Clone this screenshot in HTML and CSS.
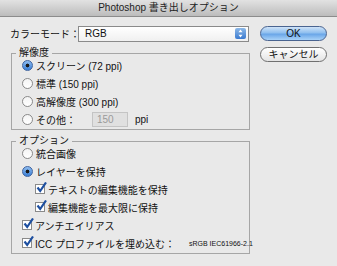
FILE: index.html
```html
<!DOCTYPE html>
<html lang="ja">
<head>
    <meta charset="UTF-8">
    <title>Photoshop 書き出しオプション</title>
    <link rel="stylesheet" href="styles.css">
</head>
<body>
    <div class="window">
        <div class="titlebar">Photoshop 書き出しオプション</div>

        <div class="content">
            <div class="main">
                <!-- Color mode -->
                <div class="mode-row">
                    <span class="mode-label">カラーモード：</span>
                    <div class="select">
                        <span>RGB</span>
                        <span class="select-arrow">
                            <svg width="5" height="9" viewBox="0 0 5 9"><path d="M2.5 0.5 L4.5 3.2 L0.5 3.2 Z M2.5 8.5 L4.5 5.8 L0.5 5.8 Z" fill="#fff"/></svg>
                        </span>
                    </div>
                </div>

                <!-- Resolution -->
                <div class="group group-res">
                    <span class="legend">解像度</span>
                    <div class="row"><span class="radio on"></span>スクリーン (72 ppi)</div>
                    <div class="row"><span class="radio"></span>標準 (150 ppi)</div>
                    <div class="row"><span class="radio"></span>高解像度 (300 ppi)</div>
                    <div class="row">
                        <span class="radio"></span><span class="other-label">その他：</span>
                        <span class="num-input">150</span>
                        <span class="unit">ppi</span>
                    </div>
                </div>

                <!-- Options -->
                <div class="group group-opt">
                    <span class="legend">オプション</span>
                    <div class="row"><span class="radio"></span>統合画像</div>
                    <div class="row"><span class="radio on"></span>レイヤーを保持</div>
                    <div class="row indent"><span class="check"><svg width="11" height="11" viewBox="0 0 11 11"><path d="M1.5 5.5 L4.2 9 L10 0.5" fill="none" stroke="#1d4fa0" stroke-width="2.2"/></svg></span>テキストの編集機能を保持</div>
                    <div class="row indent"><span class="check"><svg width="11" height="11" viewBox="0 0 11 11"><path d="M1.5 5.5 L4.2 9 L10 0.5" fill="none" stroke="#1d4fa0" stroke-width="2.2"/></svg></span>編集機能を最大限に保持</div>
                    <div class="row"><span class="check"><svg width="11" height="11" viewBox="0 0 11 11"><path d="M1.5 5.5 L4.2 9 L10 0.5" fill="none" stroke="#1d4fa0" stroke-width="2.2"/></svg></span>アンチエイリアス</div>
                    <div class="row"><span class="check"><svg width="11" height="11" viewBox="0 0 11 11"><path d="M1.5 5.5 L4.2 9 L10 0.5" fill="none" stroke="#1d4fa0" stroke-width="2.2"/></svg></span>ICC プロファイルを埋め込む：<span class="profile">sRGB IEC61966-2.1</span></div>
                </div>
            </div>

            <div class="buttons">
                <button class="btn btn-ok">OK</button>
                <button class="btn">キャンセル</button>
            </div>
        </div>
    </div>
</body>
</html>
```

FILE: styles.css
```css
* {
    margin: 0;
    padding: 0;
    box-sizing: border-box;
}

body {
    font-family: 'Liberation Sans', 'Noto Sans CJK JP', sans-serif;
    font-size: 10px;
    color: #111;
    background: #e9e9e9;
}

.window {
    width: 337px;
    height: 266px;
    overflow: hidden;
}

.titlebar {
    height: 17px;
    line-height: 16px;
    text-align: center;
    font-size: 10px;
    color: #222;
    background: linear-gradient(#e2e2e2, #bcbcbc);
    border-bottom: 1px solid #8c8c8c;
}

.content {
    display: flex;
}

.main {
    width: 252px;
    padding: 8px 0 0 11px;
}

.mode-row {
    display: flex;
    align-items: center;
    height: 17px;
}

.mode-label {
    width: 68px;
    margin-left: -1px;
    white-space: nowrap;
}

.select {
    display: flex;
    align-items: center;
    justify-content: space-between;
    width: 171px;
    height: 16px;
    padding: 0 2px 0 6px;
    border: 1px solid #8a8a8a;
    background: linear-gradient(#ffffff, #f0f0f0);
}

.select-arrow {
    display: flex;
    align-items: center;
    justify-content: center;
    width: 11px;
    height: 11px;
    border-radius: 2px;
    background: linear-gradient(#8cb8e8, #3b7bd0);
}

.group {
    position: relative;
    width: 239px;
    border: 1px solid #a6a6a6;
    padding: 2px 0 1px 10px;
}

.group-res {
    margin-top: 11px;
}

.group-opt {
    margin-top: 11px;
    padding-bottom: 1px;
}

.legend {
    position: absolute;
    top: -8px;
    left: 4px;
    padding: 0 3px;
    background: #e9e9e9;
    line-height: 14px;
}

.row {
    display: flex;
    align-items: center;
    height: 18px;
    white-space: nowrap;
}

.row.indent {
    padding-left: 13px;
}

.radio {
    width: 11px;
    height: 11px;
    margin-right: 3px;
    border: 1px solid #8a8a8a;
    border-radius: 50%;
    background: linear-gradient(#f4f4f4, #ffffff);
    flex-shrink: 0;
}

.radio.on {
    border-color: #3e64a0;
    background: radial-gradient(circle, #1a1a1a 0 1.6px, transparent 2.2px), linear-gradient(#8fbcef, #3a7fd6);
}

.check {
    display: flex;
    align-items: center;
    justify-content: center;
    width: 10px;
    height: 10px;
    margin-right: 3px;
    border: 1px solid #8a8a8a;
    background: #fff;
    flex-shrink: 0;
}

.check svg {
    margin: -4px -3px 0 0;
}

.other-label {
    width: 56px;
}

.num-input {
    width: 36px;
    height: 15px;
    line-height: 13px;
    padding-left: 4px;
    border: 1px solid #c4c4c4;
    background: #e0e0e0;
    color: #9a9a9a;
}

.unit {
    margin-left: 7px;
}

.profile {
    margin-left: 14px;
    font-size: 7px;
}

.buttons {
    display: flex;
    flex-direction: column;
    gap: 6px;
    padding: 9px 0 0 8px;
}

.btn {
    width: 67px;
    height: 15px;
    border: 1px solid #707070;
    border-radius: 8px;
    background: linear-gradient(#ffffff, #e4e4e4);
    font-family: 'Liberation Sans', 'Noto Sans CJK JP', sans-serif;
    font-size: 10px;
    line-height: 13px;
    color: #111;
}

.btn-ok {
    border-color: #4a6490;
    background: linear-gradient(#cfe3f8 0%, #8fbfef 45%, #6aa6e8 55%, #a8d2f8 100%);
}
```
